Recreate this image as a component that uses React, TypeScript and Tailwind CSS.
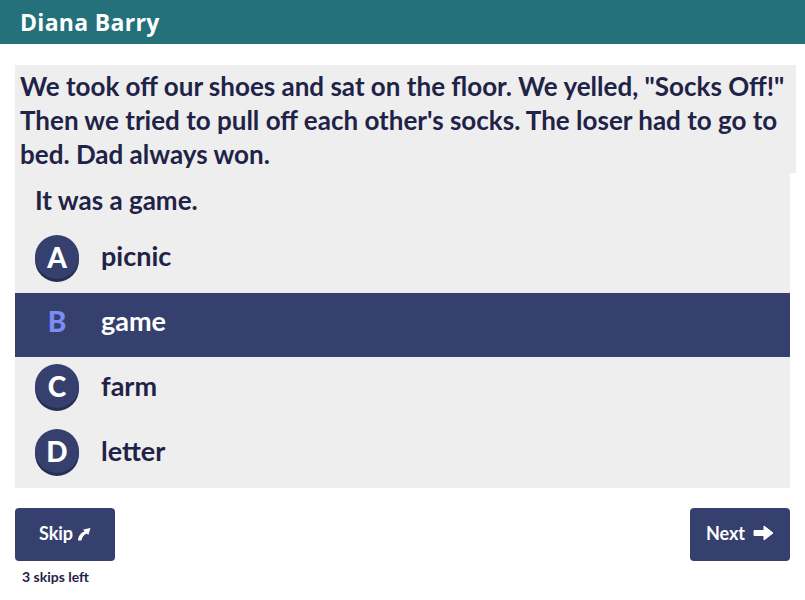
const options = [
  { letter: 'A', text: 'picnic', pad: 'pb-[9px]' },
  { letter: 'B', text: 'game', selected: true, pad: 'pb-[8px]' },
  { letter: 'C', text: 'farm', pad: 'pb-[6px]' },
  { letter: 'D', text: 'letter', pad: 'pb-[4px]' },
];

function SkipArrow() {
  return (
    <svg width="14" height="14" viewBox="0 0 14 14" className="ml-[4px] mt-[2px]">
      <path d="M1 13.5 C1.5 8.5 4 5.5 7.5 4.6 L6.2 2.6 L13.5 1 L11.3 8 L9.8 6.5 C7 7.5 5.2 10 4.4 13.5 Z" fill="white" />
    </svg>
  );
}

function NextArrow() {
  return (
    <svg width="21" height="16" viewBox="0 0 21 16" className="ml-[8px]">
      <path d="M1 5.5 L11 5.5 L11 1 L20 8 L11 15 L11 10.5 L1 10.5 Z" fill="white" strokeLinejoin="round" stroke="white" strokeWidth="1" />
    </svg>
  );
}

export default function App() {
  return (
    <div className="w-[805px] h-[600px] bg-white text-[#1f2347] font-['Lato',sans-serif]">
      {/* Header */}
      <div className="h-[44px] bg-[#24707b] flex items-center px-5">
        <h1 className="text-white font-bold text-[23px] tracking-[0.3px] font-['Open_Sans',sans-serif]">Diana Barry</h1>
      </div>

      {/* Passage */}
      <div className="mt-[21px] ml-[15px] w-[781px] bg-[#eeeeee] px-[5px] pt-[4px] pb-[2px]">
        <p className="text-[26px] font-bold leading-[34px]">
          We took off our shoes and sat on the floor. We yelled, "Socks Off!" Then we tried to pull off each other's socks. The loser had to go to bed. Dad always won.
        </p>
      </div>

      {/* Question */}
      <div className="ml-[15px] w-[775px] bg-[#eeeeee] pb-[3px]">
        <p className="pl-5 pt-[11px] pb-[12px] text-[26px] font-bold leading-[33px]">It was a game.</p>
        {options.map(o => (
          <div
            key={o.letter}
            className={`h-[64px] flex items-center pl-5 ${o.pad} ${o.selected ? 'bg-[#35406e]' : ''}`}
          >
            {o.selected ? (
              <span className="w-[44px] text-center text-[28px] font-black text-[#7b8cf5]">{o.letter}</span>
            ) : (
              <span className="w-[44px] h-[44px] rounded-full bg-[#35406e] shadow-[0_3px_0_#262e52] flex items-center justify-center text-white text-[28px] font-black">
                {o.letter}
              </span>
            )}
            <span className={`ml-[22px] text-[27px] font-bold ${o.selected ? 'text-white' : ''}`}>{o.text}</span>
          </div>
        ))}
      </div>

      {/* Buttons */}
      <div className="mt-5 px-[15px] flex justify-between">
        <div className="flex flex-col">
          <button className="w-[100px] h-[53px] pb-[3px] rounded-[4px] bg-[#35406e] text-white font-bold text-[18px] flex items-center justify-center">
            Skip <SkipArrow />
          </button>
          <span className="mt-[5px] ml-[7px] text-[14px] font-bold">3 skips left</span>
        </div>
        <button className="w-[100px] h-[53px] pb-[3px] rounded-[4px] bg-[#35406e] text-white font-bold text-[18px] flex items-center justify-center">
          Next <NextArrow />
        </button>
      </div>
    </div>
  );
}
